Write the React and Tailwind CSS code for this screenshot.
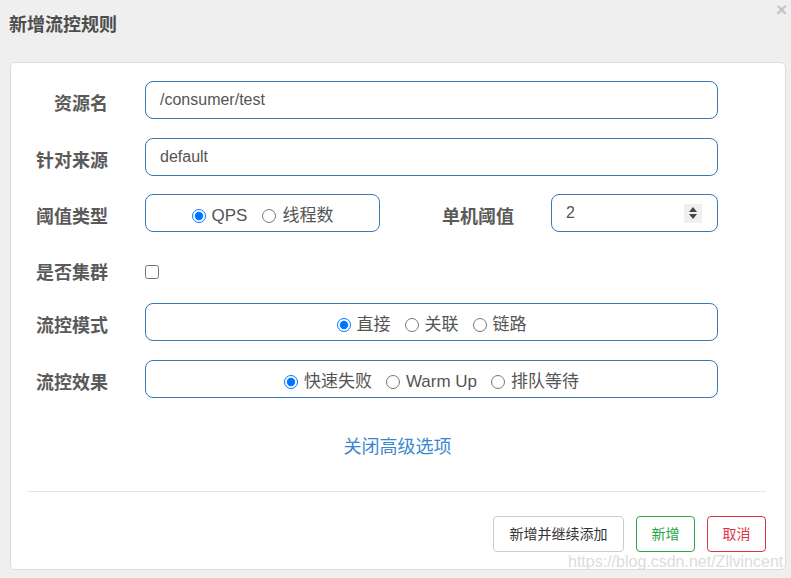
import React from 'react';

const font = { fontFamily: '"Liberation Sans", "Noto Sans CJK SC", sans-serif' };

function Radio({ label, checked, name }) {
  return (
    <label className="flex items-center gap-[6px]">
      <input type="radio" name={name} defaultChecked={checked} className="m-0 w-[14px] h-[14px]" />
      <span>{label}</span>
    </label>
  );
}

function Label({ children, className = '' }) {
  return (
    <div className={`text-right text-[18px] font-bold text-[#5a5a5a] mt-[8px] ${className}`}>{children}</div>
  );
}

const box = 'h-[38px] rounded-[8px] border border-[#3b78b4] bg-white';

function App() {
  return (
    <div style={font} className="relative w-[791px] h-[578px] bg-[#efefef] overflow-hidden">
      {/* Header */}
      <div className="flex items-start justify-between">
        <h1 className="pl-[9px] pt-[12px] text-[18px] font-bold text-[#4d4d4d] leading-[26px]">新增流控规则</h1>
        <span className="pr-[4px] pt-[1px] text-[19px] font-bold text-[#c4c4c4] leading-[18px]">×</span>
      </div>

      {/* Card */}
      <div className="absolute left-[10px] top-[62px] w-[776px] h-[508px] bg-white border border-[#dcdcdc] rounded-[5px] pl-[17px] pr-[18px] pt-[18px] pb-[18px]">
        <div className="flex items-center">
          <Label className="w-[80px]">资源名</Label>
          <div className={`${box} ml-[37px] flex-1 mr-[49px] flex items-center px-[14px] text-[16px] text-[#555]`}>/consumer/test</div>
        </div>

        <div className="flex items-center mt-[19px]">
          <Label className="w-[80px]">针对来源</Label>
          <div className={`${box} ml-[37px] flex-1 mr-[49px] flex items-center px-[14px] text-[16px] text-[#555]`}>default</div>
        </div>

        <div className="flex items-center mt-[18px]">
          <Label className="w-[80px]">阈值类型</Label>
          <div className={`${box} ml-[37px] w-[235px] flex items-center justify-center gap-[15px] pt-[5px] text-[17px] text-[#555]`}>
            <Radio name="grade" label="QPS" checked />
            <Radio name="grade" label="线程数" />
          </div>
          <Label className="w-[134px]">单机阈值</Label>
          <div className={`${box} ml-[37px] w-[167px] flex items-center justify-between pl-[14px] pr-[15px] text-[16px] text-[#555]`}>
            <span>2</span>
            <span className="w-[18px] h-[19px] bg-[#efefef] flex items-center justify-center">
              <svg width="10" height="14" viewBox="0 0 10 14">
                <path d="M5 1 L9 6 H1 Z" fill="#444" />
                <path d="M1 8 H9 L5 13 Z" fill="#444" />
              </svg>
            </span>
          </div>
        </div>

        <div className="flex items-center mt-[18px] h-[38px]">
          <Label className="w-[80px]">是否集群</Label>
          <input type="checkbox" className="ml-[37px] mt-[5px] w-[14px] h-[14px]" />
        </div>

        <div className="flex items-center mt-[15px]">
          <Label className="w-[80px]">流控模式</Label>
          <div className={`${box} ml-[37px] flex-1 mr-[49px] flex items-center justify-center gap-[14px] pt-[6px] text-[17px] text-[#555]`}>
            <Radio name="strategy" label="直接" checked />
            <Radio name="strategy" label="关联" />
            <Radio name="strategy" label="链路" />
          </div>
        </div>

        <div className="flex items-center mt-[19px]">
          <Label className="w-[80px]">流控效果</Label>
          <div className={`${box} ml-[37px] flex-1 mr-[49px] flex items-center justify-center gap-[14px] pt-[6px] text-[17px] text-[#555]`}>
            <Radio name="behavior" label="快速失败" checked />
            <Radio name="behavior" label="Warm Up" />
            <Radio name="behavior" label="排队等待" />
          </div>
        </div>

        <div className="mt-[37px] text-center text-[18px] leading-[24px] text-[#3a87cf]">关闭高级选项</div>

        <hr className="mt-[32px] border-0 border-t border-[#e5e5e5] mr-[1px]" />

        <div className="flex justify-end gap-[12px] mt-[24px] pr-[1px] text-[14px]">
          <button className="w-[131px] h-[36px] rounded-[4px] border border-[#cccccc] text-[#333] bg-white">新增并继续添加</button>
          <button className="w-[59px] h-[36px] rounded-[4px] border border-[#28a745] text-[#28a745] bg-white">新增</button>
          <button className="w-[59px] h-[36px] rounded-[4px] border border-[#dc3545] text-[#dc3545] bg-white">取消</button>
        </div>
      </div>

      {/* Watermark */}
      <div className="absolute left-[568px] top-[550px] text-[16px] text-[#dcdcdc] whitespace-nowrap">https://blog.csdn.net/Zllvincent</div>
    </div>
  );
}

export default App;
